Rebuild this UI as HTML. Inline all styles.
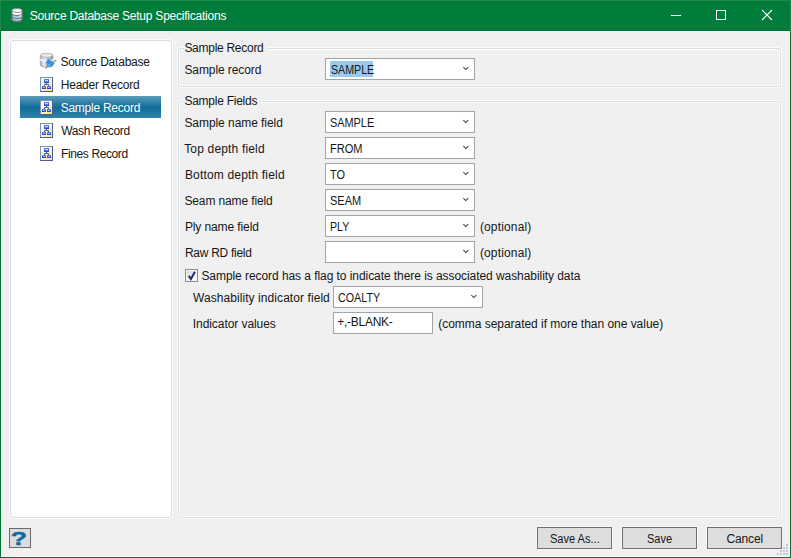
<!DOCTYPE html>
<html><head><meta charset="utf-8">
<title>Source Database Setup Specifications</title>
<style>
html,body{margin:0;padding:0;}
body{width:791px;height:558px;position:relative;overflow:hidden;background:#f0f0f0;font-family:"Liberation Sans",sans-serif;font-size:12px;color:#161616;}
.a,.t,svg{position:absolute;}
.t{white-space:nowrap;line-height:16px;height:16px;transform-origin:0 50%;}
#frame{left:0;top:0;width:789px;height:556px;border:1px solid #007634;}
#client{left:1px;top:31px;width:787px;height:524px;border:1px solid #fffaff;background:#f0f0f0;}
#title{left:0;top:0;width:789px;height:29px;background:#007c3b;border:1px solid #1e8a50;border-bottom:1px solid #007431;}
.panel{border:1px solid #d5dfe5;border-radius:3px;box-shadow:0 0 0 1px #fcfcfc, inset 0 0 0 1px #fcfcfc;box-sizing:border-box;}
.gap{background:#f0f0f0;height:3px;}
.combo{height:22px;background:#fff;border:1px solid #a2a4ac;box-sizing:border-box;}
.btn{height:22px;width:75px;box-sizing:border-box;border:1px solid #707070;background:#dddddd;box-shadow:0 0 0 1px #f6f6f6;}
.sel{background:#99c9ef;}
.ico{left:40px;width:13px;height:15px;}
</style></head><body>
<div class="a" id="frame"></div>
<div class="a" id="client"></div>
<div class="a" id="title"></div>

<!-- title icon -->
<svg style="left:10px;top:7px" width="14" height="16" viewBox="0 0 14 16">
 <path d="M2 3.5 V12.5 A5 2 0 0 0 12 12.5 V3.5 Z" fill="#a9cde6" stroke="#70757a" stroke-width="1"/>
 <path d="M2 3.5 V7 L12 10 V3.5 Z" fill="#fff"/>
 <ellipse cx="7" cy="3.5" rx="5" ry="2" fill="#fff" stroke="#8a8f94" stroke-width="1"/>
 <path d="M2 6.5 A5 2 0 0 0 12 6.5 M2 9.5 A5 2 0 0 0 12 9.5" fill="none" stroke="#70757a" stroke-width="1"/>
 <path d="M2 3.5 V12.5 A5 2 0 0 0 12 12.5 V3.5" fill="none" stroke="#70757a" stroke-width="1"/>
</svg>
<!-- window controls -->
<svg style="left:660px;top:0" width="130" height="31" viewBox="0 0 130 31" shape-rendering="crispEdges">
 <rect x="11" y="15" width="10" height="1" fill="#fff"/>
 <rect x="56.5" y="10.5" width="9" height="9" fill="none" stroke="#fff" stroke-width="1"/>
 <path d="M102 10 L112 20 M112 10 L102 20" stroke="#fff" stroke-width="1.1" shape-rendering="auto"/>
</svg>

<!-- left tree -->
<div class="a panel" style="left:10px;top:40px;width:162px;height:478px;background:#fff;"></div>
<div class="a" style="left:20px;top:96px;width:141px;height:22px;background:linear-gradient(#5c9cbc,#116b99 52%,#3382aa);"></div>

<!-- db icon -->
<svg style="left:38px;top:51px" width="20" height="18" viewBox="0 0 20 18">
 <defs><linearGradient id="cg" x1="0" x2="1"><stop offset="0" stop-color="#a9b2bb"/><stop offset=".3" stop-color="#e6eaed"/><stop offset=".7" stop-color="#bcc4cb"/><stop offset="1" stop-color="#99a3ac"/></linearGradient>
 <linearGradient id="pg" x1="0" y1="0" x2="1" y2="1"><stop offset="0" stop-color="#2f8ddb"/><stop offset=".5" stop-color="#62b0ee"/><stop offset="1" stop-color="#3d98e2"/></linearGradient></defs>
 <path d="M2.3 4.3 V14 A6.3 2 0 0 0 14.9 14 V4.3 Z" fill="url(#cg)" stroke="#96a0a9" stroke-width=".8"/>
 <ellipse cx="8.6" cy="4.3" rx="6.3" ry="2" fill="#d6dce1" stroke="#9fa8b1" stroke-width=".8"/>
 <ellipse cx="8.6" cy="4.4" rx="4.8" ry="1.2" fill="#e9edf0"/>
 <path d="M2.3 8 A6.3 2 0 0 0 14.9 8" fill="none" stroke="#fff" stroke-width="1.2"/>
 <path d="M12.8 8 L15 5.8 M15.8 11 L18.2 9.2" stroke="#8e8e8e" stroke-width="1.5"/><path d="M13.4 7.4 L15 5.8 M16.4 10.5 L18.2 9.2" stroke="#e8e8e8" stroke-width=".7" stroke-dasharray=".7 .7"/>
 <path d="M9.4 15.2 L7.7 17.5" stroke="#8e8e8e" stroke-width="1.3"/>
 <path d="M10.3 8.2 L16.3 12.3 L13.2 15.8 L9.8 15.4 L8.3 11.4 Z" fill="url(#pg)" stroke="#3b93dd" stroke-width=".9" stroke-linejoin="round"/>
 <path d="M9.7 9.3 L15.5 13.3 M9.2 10.8 L14.4 14.5" stroke="#1c6fc4" stroke-width=".8"/>
</svg>

<!-- record icons -->
<svg width="0" height="0" style="left:0;top:0"><defs>
 <linearGradient id="yg" x1="0" y1="0" x2="1" y2="1"><stop offset="0" stop-color="#ffffff"/><stop offset=".45" stop-color="#fff9d8"/><stop offset="1" stop-color="#ffdf6a"/></linearGradient>
 <linearGradient id="bg" x1="0" y1="0" x2="0" y2="1"><stop offset="0" stop-color="#5a86f0"/><stop offset="1" stop-color="#1a3fc8"/></linearGradient>
 <g id="rec">
  <rect x=".5" y=".5" width="12" height="14" fill="url(#yg)" stroke="#4d5f8a" stroke-width="1"/><path d="M.5 14 V.5 H12" fill="none" stroke="#8292b2" stroke-width="1"/>
  <rect x="4" y="2" width="5" height="4" fill="url(#bg)"/>
  <rect x="5" y="3" width="3" height="1.3" fill="#cfe0ff"/>
  <path d="M6.5 6 V8 M4.5 9 V7.5 H8.5 V9" fill="none" stroke="#4a5f8a" stroke-width="1"/>
  <rect x="2" y="9" width="4" height="3" fill="url(#bg)"/>
  <rect x="7" y="9" width="4" height="3" fill="url(#bg)"/>
  <rect x="3" y="10" width="2" height=".8" fill="#bcd2ff"/>
  <rect x="8" y="10" width="2" height=".8" fill="#bcd2ff"/>
 </g></defs></svg>
<svg class="ico" style="top:77px" viewBox="0 0 13 15"><use href="#rec"/></svg>
<svg class="ico" style="top:100px" viewBox="0 0 13 15"><use href="#rec"/></svg>
<svg class="ico" style="top:123px" viewBox="0 0 13 15"><use href="#rec"/></svg>
<svg class="ico" style="top:146px" viewBox="0 0 13 15"><use href="#rec"/></svg>

<!-- groups -->
<div class="a panel" style="left:178px;top:48px;width:603px;height:39px;"></div>
<div class="a gap" style="left:184px;top:47px;width:83px;"></div>
<div class="a panel" style="left:178px;top:101px;width:603px;height:417px;"></div>
<div class="a gap" style="left:184px;top:100px;width:76px;"></div>

<!-- combos -->
<div class="a combo" style="left:325px;top:58px;width:150px;"></div>
<div class="a sel" style="left:330px;top:61px;width:43px;height:16px;"></div>
<div class="a combo" style="left:325px;top:111px;width:150px;"></div>
<div class="a combo" style="left:325px;top:137px;width:150px;"></div>
<div class="a combo" style="left:325px;top:163px;width:150px;"></div>
<div class="a combo" style="left:325px;top:189px;width:150px;"></div>
<div class="a combo" style="left:325px;top:215px;width:150px;"></div>
<div class="a combo" style="left:325px;top:241px;width:150px;"></div>
<div class="a combo" style="left:333px;top:286px;width:150px;"></div>
<div class="a combo" style="left:333px;top:312px;width:100px;"></div>
<svg width="0" height="0" style="left:0;top:0"><defs><path id="chev" d="M.3 1.1 L2.8 3.6 L5.3 1.1" fill="none" stroke="#404040" stroke-width="1.05"/></defs></svg>
<svg style="left:463px;top:66px" width="6" height="5"><use href="#chev"/></svg>
<svg style="left:463px;top:119px" width="6" height="5"><use href="#chev"/></svg>
<svg style="left:463px;top:145px" width="6" height="5"><use href="#chev"/></svg>
<svg style="left:463px;top:171px" width="6" height="5"><use href="#chev"/></svg>
<svg style="left:463px;top:197px" width="6" height="5"><use href="#chev"/></svg>
<svg style="left:463px;top:223px" width="6" height="5"><use href="#chev"/></svg>
<svg style="left:463px;top:249px" width="6" height="5"><use href="#chev"/></svg>
<svg style="left:471px;top:294px" width="6" height="5"><use href="#chev"/></svg>

<!-- checkbox -->
<div class="a" style="left:185px;top:269px;width:13px;height:13px;box-sizing:border-box;border:1px solid #8e8f8f;background:#f4f4f4;"></div>
<div class="a" style="left:187px;top:271px;width:9px;height:9px;background:linear-gradient(135deg,#cfd3dc,#f2f3f6 60%,#fff);"></div>
<svg style="left:185px;top:269px" width="13" height="13" viewBox="0 0 13 13"><path d="M3.8 6.9 L5.9 10.1 L9.9 2.8" fill="none" stroke="#26268c" stroke-width="2"/></svg>

<!-- help button -->
<div class="a" style="left:9px;top:528px;width:22px;height:20px;box-sizing:border-box;border:1px solid #6a6a6a;background:#dcdcdc;"></div>
<span class="t" style="left:9px;top:528px;font-size:19px;font-weight:bold;color:#0a6aa6;-webkit-text-stroke:.4px #0a6aa6;line-height:22px;height:22px;width:20px;text-align:center;transform-origin:50% 50%;transform:scaleX(1.4);">?</span>

<!-- buttons -->
<div class="a btn" style="left:537px;top:527px;"></div>
<div class="a btn" style="left:622px;top:527px;"></div>
<div class="a btn" style="left:707px;top:527px;"></div>

<!-- size grip -->
<svg style="left:776px;top:543px" width="12" height="12" viewBox="0 0 12 12" shape-rendering="crispEdges">
 <g fill="#c2cadf">
 <rect x="10" y="1" width="2" height="2"/>
 <rect x="7" y="4" width="2" height="2"/><rect x="10" y="4" width="2" height="2"/>
 <rect x="4" y="7" width="2" height="2"/><rect x="7" y="7" width="2" height="2"/><rect x="10" y="7" width="2" height="2"/>
 <rect x="1" y="10" width="2" height="2"/><rect x="4" y="10" width="2" height="2"/><rect x="7" y="10" width="2" height="2"/><rect x="10" y="10" width="2" height="2"/>
 </g>
</svg>

<span class="t" style="left:29.7px;top:8px;letter-spacing:-0.231px;color:#fff;">Source Database Setup Specifications</span>
<span class="t" style="left:60.4px;top:54px;letter-spacing:-0.224px;">Source Database</span>
<span class="t" style="left:60.7px;top:77px;letter-spacing:-0.198px;">Header Record</span>
<span class="t" style="left:60.7px;top:100px;letter-spacing:-0.252px;color:#fff;">Sample Record</span>
<span class="t" style="left:61.2px;top:123px;letter-spacing:-0.325px;">Wash Record</span>
<span class="t" style="left:61.1px;top:146px;letter-spacing:-0.398px;">Fines Record</span>
<span class="t" style="left:184.4px;top:40px;letter-spacing:-0.277px;">Sample Record</span>
<span class="t" style="left:184.4px;top:93px;letter-spacing:-0.253px;">Sample Fields</span>
<span class="t" style="left:184.4px;top:62px;letter-spacing:-0.087px;">Sample record</span>
<span class="t" style="left:184.4px;top:115px;letter-spacing:-0.056px;">Sample name field</span>
<span class="t" style="left:184.2px;top:141px;letter-spacing:0.167px;">Top depth field</span>
<span class="t" style="left:184.9px;top:167px;letter-spacing:0.174px;">Bottom depth field</span>
<span class="t" style="left:184.4px;top:193px;letter-spacing:-0.118px;">Seam name field</span>
<span class="t" style="left:184.9px;top:219px;letter-spacing:-0.106px;">Ply name field</span>
<span class="t" style="left:184.9px;top:245px;letter-spacing:-0.276px;">Raw RD field</span>
<span class="t" style="left:330.9px;top:62px;transform:scaleX(0.8873);">SAMPLE</span>
<span class="t" style="left:329.9px;top:115px;transform:scaleX(0.9078);">SAMPLE</span>
<span class="t" style="left:330.4px;top:141px;transform:scaleX(0.9228);">FROM</span>
<span class="t" style="left:329.9px;top:167px;transform:scaleX(0.9117);">TO</span>
<span class="t" style="left:329.9px;top:193px;transform:scaleX(0.9172);">SEAM</span>
<span class="t" style="left:330.4px;top:219px;transform:scaleX(0.8809);">PLY</span>
<span class="t" style="left:479.9px;top:219px;letter-spacing:0.152px;">(optional)</span>
<span class="t" style="left:479.9px;top:245px;letter-spacing:0.152px;">(optional)</span>
<span class="t" style="left:201.4px;top:268px;letter-spacing:-0.063px;">Sample record has a flag to indicate there is associated washability data</span>
<span class="t" style="left:193.0px;top:290px;letter-spacing:0.071px;">Washability indicator field</span>
<span class="t" style="left:337.8px;top:290px;transform:scaleX(0.8955);">COALTY</span>
<span class="t" style="left:192.8px;top:316px;letter-spacing:-0.070px;">Indicator values</span>
<span class="t" style="left:337.3px;top:314px;letter-spacing:-0.273px;">+,-BLANK-</span>
<span class="t" style="left:438.2px;top:316px;letter-spacing:-0.029px;">(comma separated if more than one value)</span>
<span class="t" style="left:550.4px;top:531px;transform:scaleX(0.9198);">Save As...</span>
<span class="t" style="left:646.6px;top:531px;transform:scaleX(0.9211);">Save</span>
<span class="t" style="left:726.4px;top:531px;letter-spacing:-0.132px;">Cancel</span>
</body></html>
